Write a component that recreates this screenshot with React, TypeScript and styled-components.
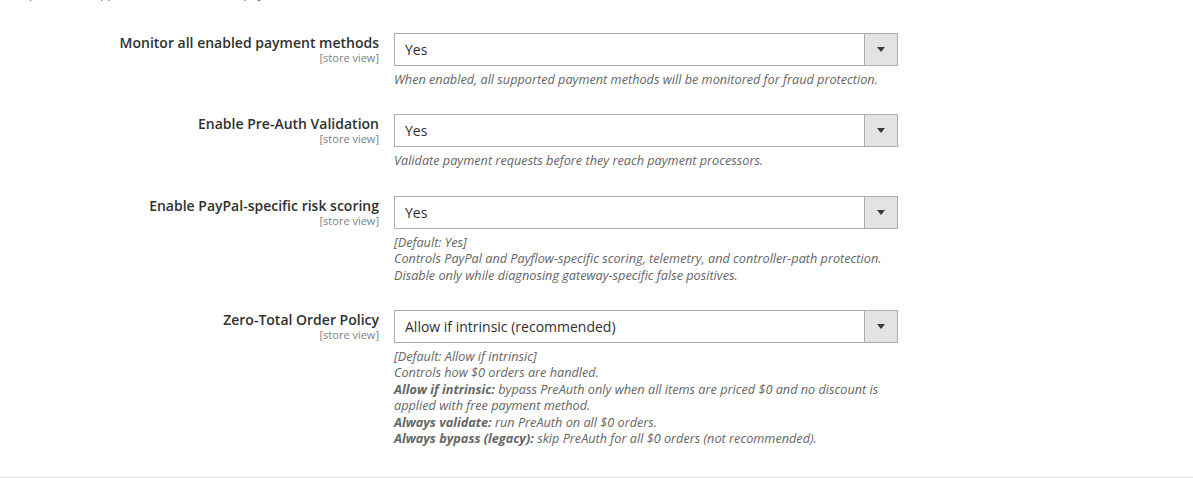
import React from "react";
import styled, { createGlobalStyle } from "styled-components";

const GlobalStyle = createGlobalStyle`
  html, body {
    margin: 0;
    padding: 0;
    background: #ffffff;
    font-family: "Open Sans", "Liberation Sans", Arial, sans-serif;
    color: #303030;
  }
`;

type Choice = {
  label: string;
  value: string;
  notes: React.ReactNode[];
};

const fields: Choice[] = [
  {
    label: "Monitor all enabled payment methods",
    value: "Yes",
    notes: [
      "When enabled, all supported payment methods will be monitored for fraud protection.",
    ],
  },
  {
    label: "Enable Pre-Auth Validation",
    value: "Yes",
    notes: ["Validate payment requests before they reach payment processors."],
  },
  {
    label: "Enable PayPal-specific risk scoring",
    value: "Yes",
    notes: [
      "[Default: Yes]",
      "Controls PayPal and Payflow-specific scoring, telemetry, and controller-path protection.",
      "Disable only while diagnosing gateway-specific false positives.",
    ],
  },
  {
    label: "Zero-Total Order Policy",
    value: "Allow if intrinsic (recommended)",
    notes: [
      "[Default: Allow if intrinsic]",
      "Controls how $0 orders are handled.",
      <>
        <b>Allow if intrinsic:</b> bypass PreAuth only when all items are priced
        $0 and no discount is applied with free payment method.
      </>,
      <>
        <b>Always validate:</b> run PreAuth on all $0 orders.
      </>,
      <>
        <b>Always bypass (legacy):</b> skip PreAuth for all $0 orders (not
        recommended).
      </>,
    ],
  },
];

export default function App() {
  return (
    <>
      <GlobalStyle />
      <Page>
        <SectionComment>
          protection. Applies to all current store payment methods.
        </SectionComment>
        <ConfigTable>
          {fields.map((f) => (
            <Row key={f.label}>
              <Label>
                <LabelText>{f.label}</LabelText>
                <Scope>[store view]</Scope>
              </Label>
              <Value>
                <Select>
                  <SelectValue>{f.value}</SelectValue>
                  <ArrowBox>
                    <Caret />
                  </ArrowBox>
                </Select>
                <Note>
                  {f.notes.map((n, i) => (
                    <NoteLine key={i}>{n}</NoteLine>
                  ))}
                </Note>
              </Value>
            </Row>
          ))}
        </ConfigTable>
        <NextSection />
      </Page>
    </>
  );
}

const Page = styled.div`
  width: 1193px;
  height: 478px;
  overflow: hidden;
`;

const SectionComment = styled.div`
  margin-top: -15px;
  padding-left: 30px;
  font-size: 12.7px;
  font-style: italic;
  line-height: 16px;
  color: #666666;
  white-space: nowrap;
`;

const ConfigTable = styled.div`
  display: flex;
  flex-direction: column;
  gap: 27px;
  padding-top: 32px;
  padding-bottom: 31px;
`;

const Row = styled.div`
  display: grid;
  grid-template-columns: 379px 504px;
  column-gap: 15px;
`;

const Label = styled.div`
  display: flex;
  flex-direction: column;
  align-items: flex-end;
  text-align: right;
`;

const LabelText = styled.span`
  font-size: 14px;
  font-weight: 600;
  line-height: 19px;
  color: #303030;
`;

const Scope = styled.span`
  font-size: 11px;
  line-height: 13px;
  color: #808080;
  margin-top: -1px;
`;

const Value = styled.div`
  display: flex;
  flex-direction: column;
`;

const Select = styled.div`
  display: flex;
  height: 33px;
  box-sizing: border-box;
  border: 1px solid #adadad;
  background: #ffffff;
`;

const SelectValue = styled.div`
  flex: 1;
  padding: 6px 10px 0;
  font-size: 14px;
  line-height: 19px;
  color: #303030;
`;

const ArrowBox = styled.div`
  width: 32px;
  display: flex;
  align-items: center;
  justify-content: center;
  background: #e3e3e3;
  border-left: 1px solid #adadad;
`;

const Caret = styled.span`
  width: 0;
  height: 0;
  border-left: 4px solid transparent;
  border-right: 4px solid transparent;
  border-top: 5px solid #41362f;
`;

const Note = styled.div`
  margin-top: 5px;
  font-size: 12.7px;
  font-style: italic;
  line-height: 16.4px;
  color: #666666;

  b {
    font-weight: 700;
  }
`;

const NoteLine = styled.div``;

const NextSection = styled.div`
  height: 20px;
  background: #e3e3e3;
`;
